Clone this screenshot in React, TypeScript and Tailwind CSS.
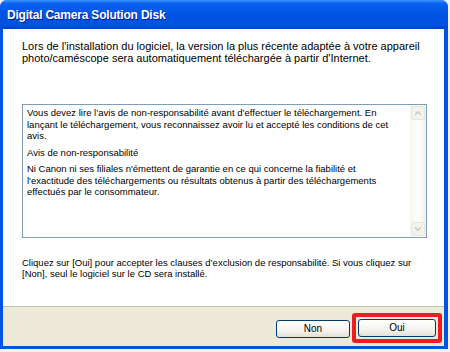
import { ChevronDown, ChevronUp } from "lucide-react";

function XpButton({ label }: { label: string }) {
  return (
    <button className="flex h-[18px] w-full items-center justify-center rounded-[3px] border border-[#003c74] bg-[linear-gradient(180deg,#ffffff_0%,#f4f3ee_60%,#e3e1d6_100%)] text-[10px] leading-none text-black">
      {label}
    </button>
  );
}

function ScrollArrow({ up }: { up?: boolean }) {
  return (
    <div className="flex h-[14px] w-[14px] items-center justify-center rounded-[2px] border border-[#e8e6dc] bg-[#f3f2ec]">
      {up ? (
        <ChevronUp className="size-[10px] text-[#c9c7bd]" strokeWidth={3} />
      ) : (
        <ChevronDown className="size-[10px] text-[#c9c7bd]" strokeWidth={3} />
      )}
    </div>
  );
}

export default function App() {
  return (
    <div className="h-[352px] w-[450px] overflow-hidden bg-[#f2f2f2] font-['Liberation_Sans',Arial,sans-serif] text-black">
      <div className="flex h-[349px] w-[448px] flex-col rounded-t-[7px] bg-[#0054e3]">
        {/* title bar */}
        <div className="flex h-[29px] items-center rounded-t-[7px] bg-[linear-gradient(180deg,#3d95ff_0%,#0a62f0_12%,#0055e5_45%,#0052e0_85%,#0044cc_100%)] pl-[7px]">
          <span className="text-[12px] font-bold tracking-[-0.2px] text-white [text-shadow:1px_1px_0_#0a1f8c]">
            Digital Camera Solution Disk
          </span>
        </div>

        <div className="flex flex-1 flex-col pb-[3px] pl-[3px] pr-[4px]">
          <div className="flex flex-1 flex-col bg-white pl-[19px] pt-[12px]">
            <p className="whitespace-nowrap text-[11px] leading-[11.5px]">
              Lors de l'installation du logiciel, la version la plus récente adaptée à votre appareil
              <br />
              photo/caméscope sera automatiquement téléchargée à partir d'Internet.
            </p>

            <div className="mt-[40px] flex h-[134px] w-[405px] border border-[#7f9db9]">
              <div className="flex flex-1 flex-col gap-[5px] whitespace-nowrap pl-[4px] pt-[2px] text-[9.5px] leading-[11.5px]">
                <p>
                  Vous devez lire l’avis de non-responsabilité avant d’effectuer le téléchargement. En
                  <br />
                  lançant le téléchargement, vous reconnaissez avoir lu et accepté les conditions de cet
                  <br />
                  avis.
                </p>
                <p>Avis de non-responsabilité</p>
                <p>
                  Ni Canon ni ses filiales n'émettent de garantie en ce qui concerne la fiabilité et
                  <br />
                  l'exactitude des téléchargements ou résultats obtenus à partir des téléchargements
                  <br />
                  effectués par le consommateur.
                </p>
              </div>
              <div className="flex w-[16px] flex-col items-center justify-between bg-[linear-gradient(90deg,#f7f6f1_0%,#fdfdfb_50%,#f2f1ea_100%)] py-[1px]">
                <ScrollArrow up />
                <ScrollArrow />
              </div>
            </div>

            <p className="mt-[19px] whitespace-nowrap text-[9.5px] leading-[11px]">
              Cliquez sur [Oui] pour accepter les clauses d’exclusion de responsabilité. Si vous cliquez sur
              <br />
              [Non], seul le logiciel sur le CD sera installé.
            </p>
          </div>

          {/* footer */}
          <div className="flex h-[40px] items-start justify-end border-t border-[#c5c2b2] bg-[#ece9d8] pr-[2px] pt-[6px]">
            <div className="mt-[7px] w-[74px]">
              <XpButton label="Non" />
            </div>
            <div className="ml-[2px] w-[90px] rounded-[3px] border-[4px] border-[#ee1c24] p-[2px]">
              <XpButton label="Oui" />
            </div>
          </div>
        </div>
      </div>
    </div>
  );
}
